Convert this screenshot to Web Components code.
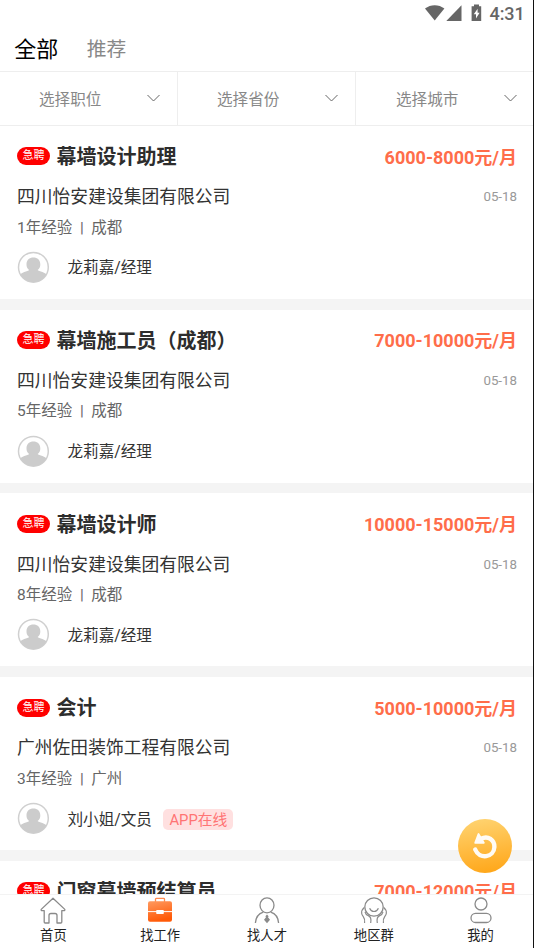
<!DOCTYPE html>
<html lang="zh-CN">
<head>
<meta charset="utf-8">
<title>找工作</title>
<style>
html,body{margin:0;padding:0}
body{font-family:Roboto,"Noto Sans CJK SC",sans-serif;width:534px;height:948px;overflow:hidden;background:#fff}
</style>
</head>
<body>
<job-app></job-app>
<script>
function define(name, html, setup){
  const t=document.createElement('template');
  t.innerHTML=html;
  customElements.define(name, class extends HTMLElement{
    constructor(){
      super();
      this.attachShadow({mode:'open'}).appendChild(t.content.cloneNode(true));
    }
    connectedCallback(){ if(setup) setup(this,this.shadowRoot); }
  });
}

define('status-bar', `
<style>
:host{display:flex;height:27px;box-sizing:border-box;padding:0 9px 0 0;justify-content:flex-end;align-items:center;color:#666}
svg{display:block;fill:#666}
.time{font-size:18px;line-height:27px;font-weight:500;margin-left:7px;width:34.500px;white-space:nowrap;letter-spacing:-.1px}
</style>
<svg width="58" height="27" viewBox="0 0 58 27">
<path d="M0 8.600C5.600 4 13.800 4 19.400 8.600L9.700 20.600Z"/>
<path d="M36.500 5.200V21H21.300Z"/>
<path fill-rule="evenodd" d="M49 4.600h5v1.600h2.200v14.800h-9.600V6.200h2.400zM52.600 8.800l-3.800 5.400h2.200v4.200l3.600-5.600h-2z"/>
</svg>
<span class="time">4:31</span>`);

define('tab-bar', `
<style>
:host{display:flex;height:44px;box-sizing:border-box;align-items:center;padding:1px 0 0 14.300px;gap:28.500px;font-size:19.800px;color:#888;white-space:nowrap}
.on{font-size:22px;color:#000}
span{line-height:43px}
</style>
<span class="on">全部</span><span>推荐</span>`);

define('filter-item', `
<style>
:host{display:flex;flex:1 1 0;align-items:center;justify-content:space-between;box-sizing:border-box;padding:0 17px 2px 39px;font-size:15.600px;color:#888;border-right:1px solid #eee;white-space:nowrap}
:host(:last-child){border-right:0;padding-right:16px;padding-left:40px}
svg{display:block}
</style>
<slot></slot>
<svg width="13" height="8" viewBox="0 0 13 8" fill="none" stroke="#666" stroke-width="1"><path d="M.5 1 6.500 7 12.500 1"/></svg>`);

define('filter-bar', `
<style>
:host{display:flex;height:55px;box-sizing:border-box;border-top:1px solid #eee;border-bottom:1px solid #eee}
</style>
<filter-item>选择职位</filter-item><filter-item>选择省份</filter-item><filter-item>选择城市</filter-item>`);

define('user-avatar', `
<style>:host{display:block;width:33px;height:33px}svg{display:block}</style>
<svg width="33" height="33" viewBox="0 0 33 33">
<circle cx="16.400" cy="16.300" r="14.900" fill="#fff" stroke="#d0d0d0" stroke-width="1.500"/>
<g fill="#ccc"><path d="M16.400 6.500c4 0 6.900 2.600 6.900 6.900 0 4-2.400 6.600-6.900 6.600s-6.900-2.600-6.900-6.600c0-4.300 2.900-6.900 6.900-6.900z"/>
<path d="M12.800 18h7.200c.2 2.600 7 2.400 9.600 5.600a15.200 15.200 0 0 1-26.400 0C5.800 20.400 12.600 20.600 12.800 18z"/></g>
</svg>`);

define('job-card', `
<style>
:host{display:block;height:173.100px;box-sizing:border-box;padding:18.200px 16px 0 17px;background:#fff;flex:none;white-space:nowrap}
.row{display:flex;align-items:center;justify-content:space-between}
.a{height:26px}
.left{display:flex;align-items:center}
.badge{width:33px;height:18px;border-radius:9px;background:#f00;color:#fff;font-size:11px;line-height:18px;text-align:center;margin-right:6.500px;margin-top:-1.500px}
.title{font-size:20px;font-weight:700;color:#2d2d2d;line-height:26px}
.pay{font-size:18px;font-weight:700;color:#ff6d4a;line-height:26px;padding-top:1px}
.b{height:26px;margin-top:14px;line-height:26px;font-size:17.800px;color:#333}
.date{font-size:13.300px;color:#999}
.c{height:22px;line-height:22px;margin-top:6.500px;font-size:15.500px;color:#666}
.d{margin-top:12.300px;height:33px;justify-content:flex-start;font-size:15.600px;color:#333}
.who{margin-left:17.500px;line-height:22px;padding-top:2px}
.tag{background:#ffe0e0;color:#ff7474;border-radius:5px;font-size:14.800px;height:21px;line-height:22px;padding:0 6px;margin:1px 0 0 11.500px}
.tag[hidden]{display:none}
</style>
<div class="row a"><div class="left"><span class="badge">急聘</span><span class="title"><slot name="title"></slot></span></div><span class="pay"><slot name="pay"></slot></span></div>
<div class="row b"><slot name="company"></slot><span class="date">05-18</span></div>
<div class="c"><slot name="meta"></slot></div>
<div class="row d"><user-avatar></user-avatar><span class="who"><slot name="who"></slot></span><span class="tag" hidden>APP在线</span></div>`,
(el,r)=>{ r.querySelector('.tag').hidden=!el.hasAttribute('online'); });

define('job-list', `
<style>
:host{display:flex;flex-direction:column;gap:10.600px;background:#f4f4f4;flex:1 1 0;min-height:0;overflow:hidden}
</style>
<job-card><span slot="title">幕墙设计助理</span><span slot="pay">6000-8000元/月</span><span slot="company">四川怡安建设集团有限公司</span><span slot="meta">1年经验&nbsp; | &nbsp;成都</span><span slot="who">龙莉嘉/经理</span></job-card>
<job-card><span slot="title">幕墙施工员（成都）</span><span slot="pay">7000-10000元/月</span><span slot="company">四川怡安建设集团有限公司</span><span slot="meta">5年经验&nbsp; | &nbsp;成都</span><span slot="who">龙莉嘉/经理</span></job-card>
<job-card><span slot="title">幕墙设计师</span><span slot="pay">10000-15000元/月</span><span slot="company">四川怡安建设集团有限公司</span><span slot="meta">8年经验&nbsp; | &nbsp;成都</span><span slot="who">龙莉嘉/经理</span></job-card>
<job-card online><span slot="title">会计</span><span slot="pay">5000-10000元/月</span><span slot="company">广州佐田装饰工程有限公司</span><span slot="meta">3年经验&nbsp; | &nbsp;广州</span><span slot="who">刘小姐/文员</span></job-card>
<job-card><span slot="title">门窗幕墙预结算员</span><span slot="pay">7000-12000元/月</span></job-card>`);

define('nav-item', `
<style>
:host{display:flex;flex:1 1 0;flex-direction:column;align-items:center;font-size:13.300px;color:#222;line-height:18px;white-space:nowrap}
.label{margin-top:2px}
::slotted(svg){display:block;fill:none;stroke:#8a8a8a;stroke-width:1.300}
</style>
<slot name="icon"></slot><span class="label"><slot></slot></span>`);

define('nav-bar', `
<style>
:host{display:flex;height:54px;box-sizing:border-box;padding-top:2px;margin-right:-1px;border-top:1px solid #f3f3f3;background:#fff}
</style>
<nav-item><svg slot="icon" width="28" height="28" viewBox="0 0 28 28"><path stroke-linejoin="round" d="M14 1.200 2.200 12.400q-.4 1.200 1 1.200H5.200V25q0 1 1 1h3.800V18.500q0-2 2-2h4q2 0 2 2V26h3.800q1 0 1-1V13.600h2q1.400 0 1-1.200Z"/></svg>首页</nav-item>
<nav-item><svg slot="icon" width="28" height="28" viewBox="0 0 28 28"><defs><linearGradient id="g" x1="0" y1="0" x2=".3" y2="1"><stop offset="0" stop-color="#ff9a60"/><stop offset="1" stop-color="#ff5a08"/></linearGradient></defs><path stroke="#ff8a50" d="M9.500 5V2.200q0-.8.8-.8h7.400q.8 0 .8.800V5"/><rect x="2" y="4.200" width="24" height="20.600" rx="2" fill="url(#g)" stroke="none"/><path stroke="#fff" stroke-width="1" d="M2 14.600h24"/><rect x="10.200" y="13" width="7.600" height="4" rx=".8" fill="#fff" stroke="none"/></svg>找工作</nav-item>
<nav-item><svg slot="icon" width="28" height="28" viewBox="0 0 28 28"><ellipse cx="14" cy="8.300" rx="7" ry="7.500"/><path d="M2.400 26C2.800 20.400 5.800 16.600 10.300 15.200M17.700 15.200C22.200 16.600 25.200 20.400 25.600 26"/><path stroke="none" fill="#8a8a8a" d="M14 17.600 15.600 19.300 15 20.300 17 22.800 14 26.200 11 22.800 13 20.300 12.400 19.300Z"/></svg>找人才</nav-item>
<nav-item><svg slot="icon" width="28" height="28" viewBox="0 0 28 28"><circle cx="14" cy="10" r="9.200"/><path stroke-width="1.200" d="M9.600 11.200Q11 14.500 14 14.500T18.400 11.200"/><path d="M4.300 10.500Q1.200 13 1.700 16.500C2.200 19.800 5.800 20.300 4.600 26M23.700 10.500Q26.800 13 26.300 16.500C25.800 19.800 22.200 20.300 23.400 26M5 14.800Q5.600 17.600 8.300 18.600 11.800 20 10.700 26M23 14.800Q22.400 17.600 19.700 18.600 16.200 20 17.300 26" stroke-width="1.200"/></svg>地区群</nav-item>
<nav-item><svg slot="icon" width="28" height="28" viewBox="0 0 28 28"><circle cx="14" cy="7" r="6"/><rect x="4" y="16.300" width="20" height="9.200" rx="4.600"/></svg>我的</nav-item>`);

define('refresh-button', `
<style>
:host{display:block;width:54px;height:54px;border-radius:50%;background:linear-gradient(170deg,#ffd574,#ffa414)}
svg{display:block}
</style>
<svg width="54" height="54" viewBox="0 0 54 54" fill="none"><g opacity=".95"><path d="M23 19.800C30 16 36.600 21 36.400 28 36 38.500 21.500 41 17.200 30.500" stroke="#fff" stroke-width="4.400" stroke-linecap="round"/><path d="M20.500 15 17.200 23.800 25.800 23.800Z" fill="#fff" stroke="#fff" stroke-width="1.800" stroke-linejoin="round"/></g></svg>`);

define('job-app', `
<style>
:host{display:flex;flex-direction:column;width:533px;height:948px;position:relative;border-right:1px solid #111;background:#fff;overflow:hidden}
refresh-button{position:absolute;left:458px;top:819px}
</style>
<status-bar></status-bar><tab-bar></tab-bar><filter-bar></filter-bar><job-list></job-list><nav-bar></nav-bar><refresh-button></refresh-button>`);
</script>
</body>
</html>
